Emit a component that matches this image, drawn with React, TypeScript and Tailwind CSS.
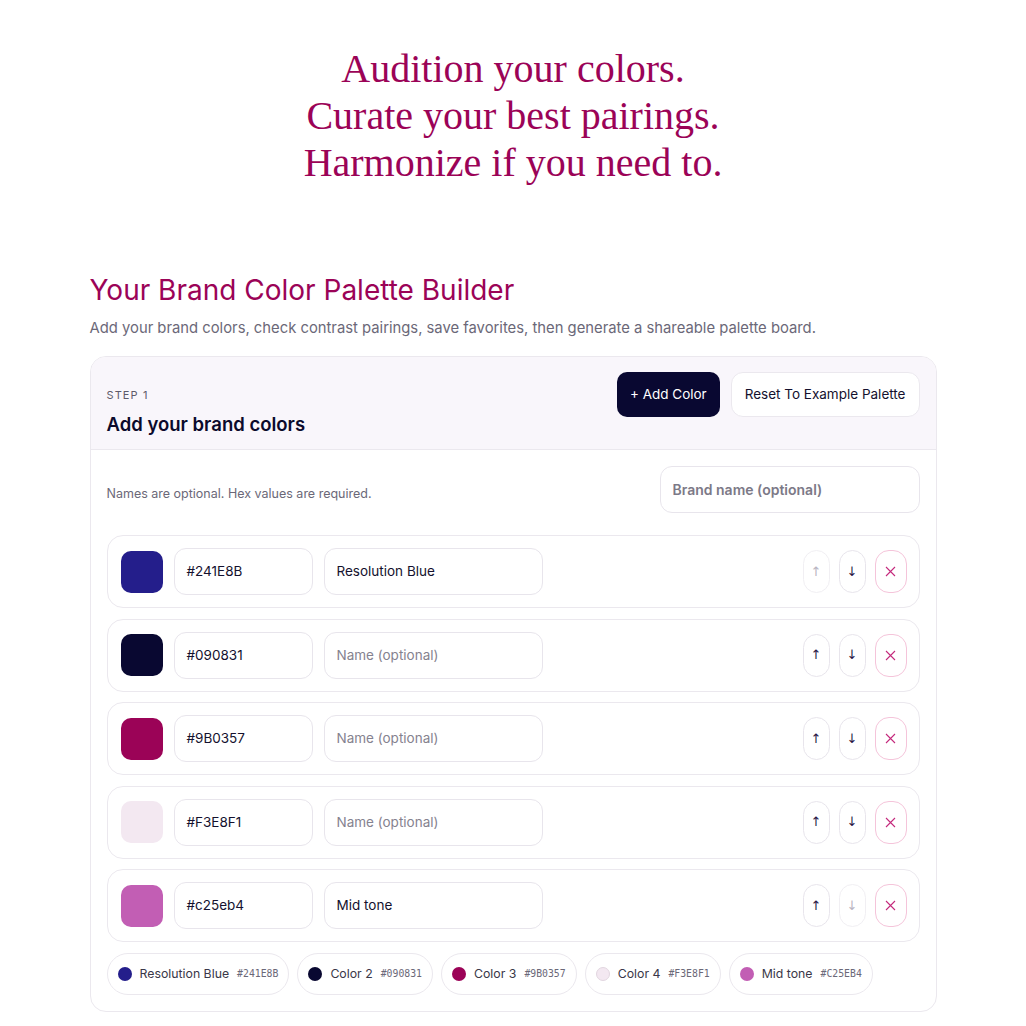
import React from "react";

type Swatch = { hex: string; name: string; label: string };

const colors: Swatch[] = [
  { hex: "#241E8B", name: "Resolution Blue", label: "Resolution Blue" },
  { hex: "#090831", name: "", label: "Color 2" },
  { hex: "#9B0357", name: "", label: "Color 3" },
  { hex: "#F3E8F1", name: "", label: "Color 4" },
  { hex: "#c25eb4", name: "Mid tone", label: "Mid tone" },
];

const sans = { fontFamily: "Inter, 'Open Sans', sans-serif" };

function ArrowButton({ dir, disabled }: { dir: "up" | "down"; disabled: boolean }) {
  return (
    <button
      className={
        "flex h-[43px] w-[27px] items-center justify-center rounded-[14px] border bg-white text-[13px] " +
        (disabled ? "border-[#f1eff3] text-[#b9b5c2]" : "border-[#e8e5ec] text-[#2a1745]")
      }
      style={{ fontFamily: "'DejaVu Sans', sans-serif" }}
    >
      {dir === "up" ? "↑" : "↓"}
    </button>
  );
}

function ColorRow({ c, i, last }: { c: Swatch; i: number; last: boolean }) {
  return (
    <div className="flex h-[73px] items-center rounded-[16px] border border-[#ebe8ee] bg-white pl-[13px] pr-[12px]">
      <div className="h-[42px] w-[42px] shrink-0 rounded-[10px]" style={{ backgroundColor: c.hex }} />
      <div className="ml-[11px] flex h-[47px] w-[139px] items-center rounded-[12px] border border-[#e8e5ec] px-3 text-[13.5px] text-[#14112e]">
        {c.hex}
      </div>
      <div
        className={
          "ml-[11px] flex h-[47px] w-[219px] items-center rounded-[12px] border border-[#e8e5ec] px-3 text-[13.5px] " +
          (c.name ? "text-[#14112e]" : "text-[#85828f]")
        }
      >
        {c.name || "Name (optional)"}
      </div>
      <div className="ml-auto flex items-center gap-[9px]">
        <ArrowButton dir="up" disabled={i === 0} />
        <ArrowButton dir="down" disabled={last} />
        <button className="flex h-[43px] w-[32px] items-center justify-center rounded-[14px] border border-[#f5c4da] bg-white">
          <svg width="11" height="11" viewBox="0 0 11 11" fill="none" stroke="#c4297c" strokeWidth="1.1">
            <path d="M1 1l9 9M10 1l-9 9" />
          </svg>
        </button>
      </div>
    </div>
  );
}

export default function App() {
  return (
    <main className="min-h-screen bg-white pb-10" style={sans}>
      <section className="pt-[45px] text-center">
        <h1
          className="text-[40px] leading-[47px] text-[#9B0357]"
          style={{ fontFamily: "'Liberation Serif', 'DejaVu Serif', serif" }}
        >
          Audition your colors.
          <br />
          Curate your best pairings.
          <br />
          Harmonize if you need to.
        </h1>
      </section>

      <section className="mx-auto mt-[86px] w-[847px]">
        <h2 className="text-[28px] leading-9 text-[#9B0357]">Your Brand Color Palette Builder</h2>
        <p className="mt-[10px] text-[14.8px] leading-5 text-[#6b6878]">
          Add your brand colors, check contrast pairings, save favorites, then generate a shareable palette board.
        </p>

        <div className="mt-[18px] overflow-hidden rounded-[16px] border border-[#ebe8ee]">
          <div className="flex h-[93px] items-start justify-between border-b border-[#ebe8ee] bg-[#f9f6fb] px-4 pt-[15px]">
            <div className="pt-[15px]">
              <p className="text-[11px] leading-4 tracking-[0.1em] text-[#5d5a6a]">STEP 1</p>
              <h3 className="mt-[10px] text-[18.5px] font-semibold leading-[22px] text-[#0b0a2c]">Add your brand colors</h3>
            </div>
            <div className="flex gap-[11px]">
              <button className="h-[45px] rounded-[10px] bg-[#090831] px-[13px] text-[13.5px] text-white">+ Add Color</button>
              <button className="h-[45px] rounded-[12px] border border-[#ebe8ee] bg-white px-[13px] text-[13.5px] text-[#14112e]">
                Reset To Example Palette
              </button>
            </div>
          </div>

          <div className="px-4 pb-4 pt-4">
            <div className="flex items-center justify-between">
              <p className="pt-[10px] text-[12.5px] text-[#6b6878]">Names are optional. Hex values are required.</p>
              <div className="flex h-[47px] w-[260px] items-center rounded-[12px] border border-[#e8e5ec] px-3 text-[14px] font-semibold text-[#7c7987]">
                Brand name (optional)
              </div>
            </div>

            <div className="mt-[22px] flex flex-col gap-[10.5px]">
              {colors.map((c, i) => (
                <ColorRow key={c.hex} c={c} i={i} last={i === colors.length - 1} />
              ))}
            </div>

            <div className="mt-[11px] flex flex-wrap gap-[8px]">
              {colors.map((c) => (
                <div
                  key={c.label}
                  className="flex h-[42px] items-center gap-2 rounded-full border border-[#ebe8ee] bg-white pl-[10px] pr-[10px]"
                >
                  <span
                    className={"h-[14px] w-[14px] rounded-full " + (c.hex === "#F3E8F1" ? "border border-[#e2d6e0]" : "")}
                    style={{ backgroundColor: c.hex }}
                  />
                  <span className="text-[12.3px] text-[#3a3748]">{c.label}</span>
                  <span
                    className="text-[9.8px] text-[#6b6878]"
                    style={{ fontFamily: "'DejaVu Sans Mono', 'Liberation Mono', monospace" }}
                  >
                    {c.hex.toUpperCase()}
                  </span>
                </div>
              ))}
            </div>
          </div>
        </div>
      </section>
    </main>
  );
}
